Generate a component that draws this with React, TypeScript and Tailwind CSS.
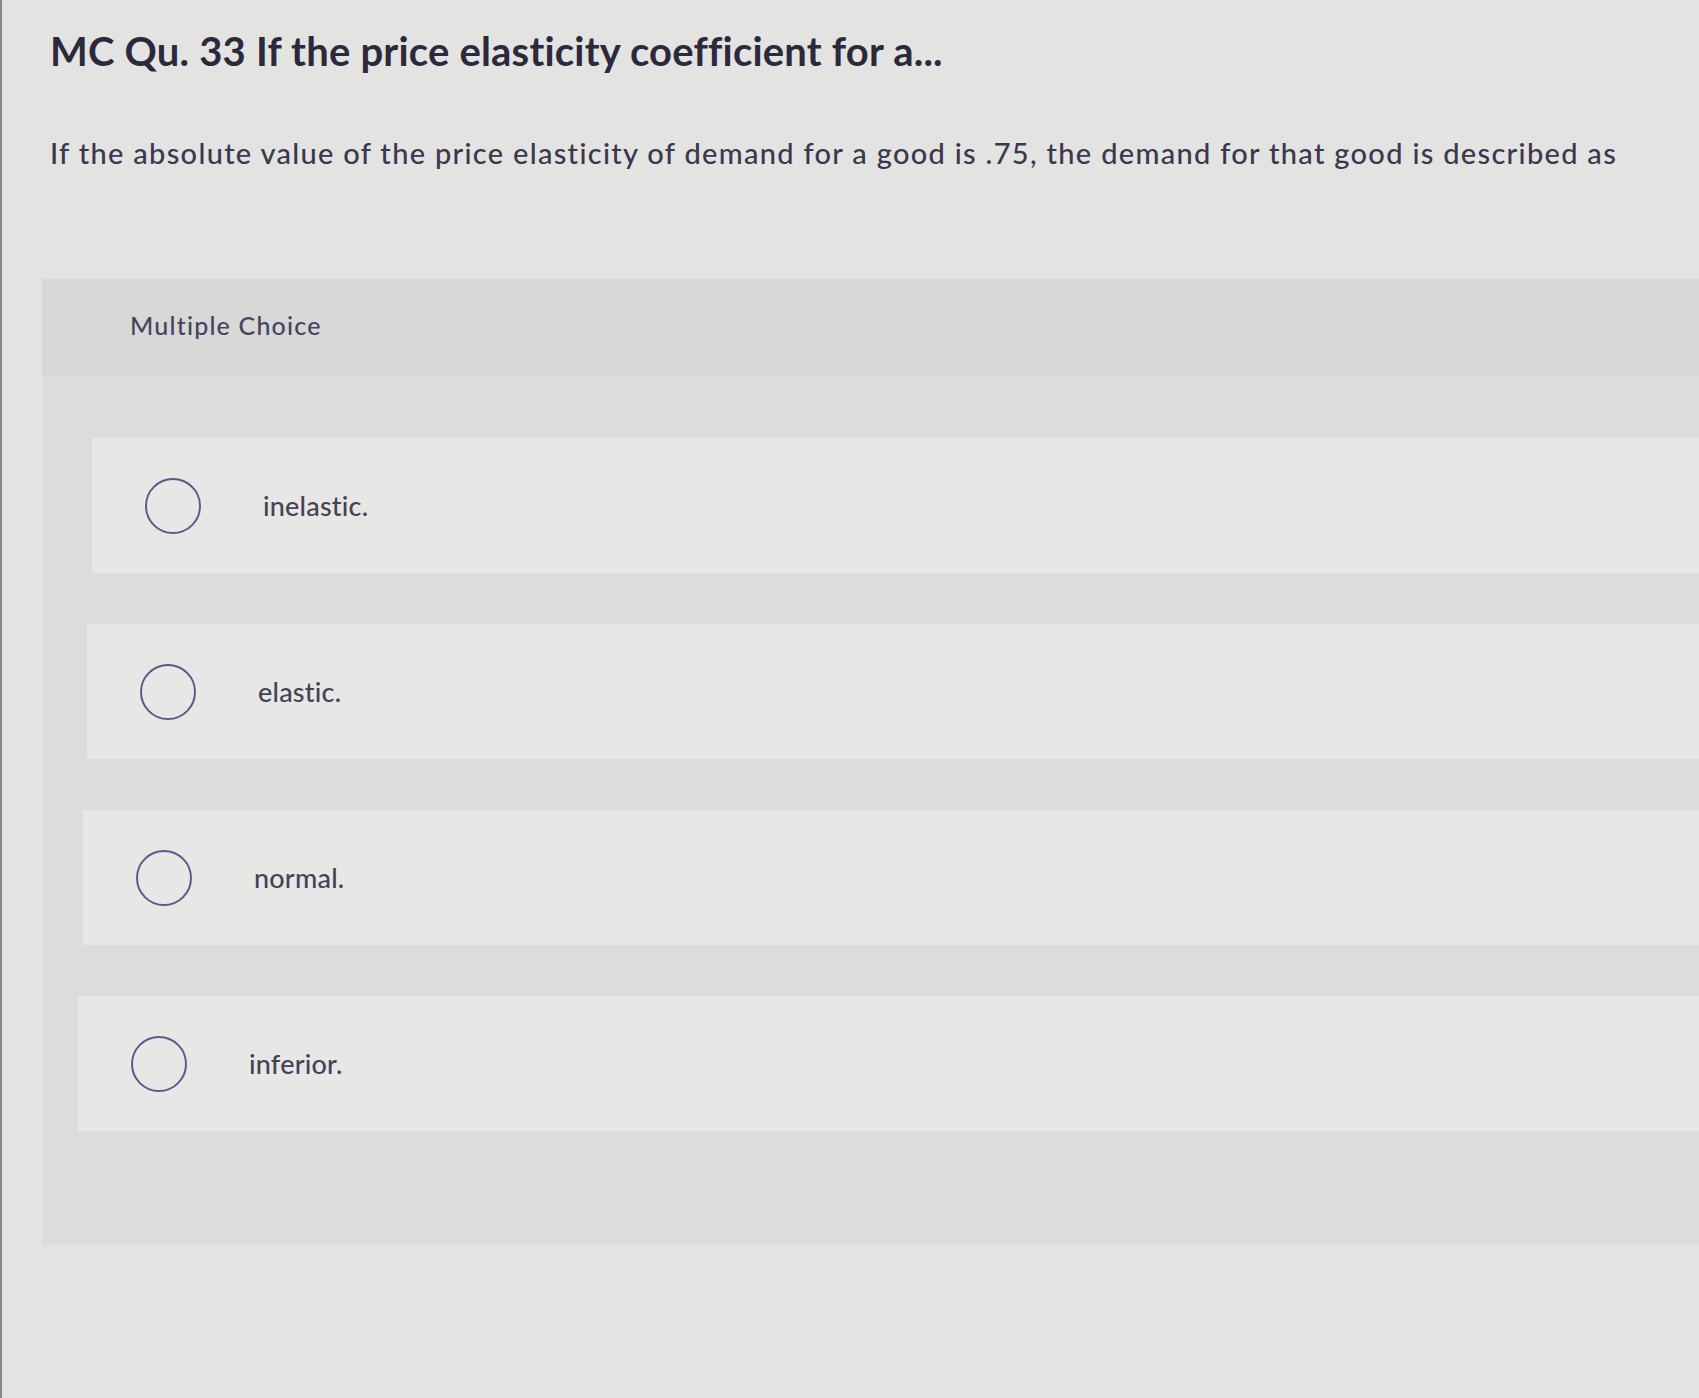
import React from "react";

const options = [
  { label: "inelastic.", ml: "ml-[50px]" },
  { label: "elastic.", ml: "ml-[45px]" },
  { label: "normal.", ml: "ml-[41px]" },
  { label: "inferior.", ml: "ml-[36px]" },
];

function Option({ label, ml }: { label: string; ml: string }) {
  return (
    <div className={`${ml} h-[135px] bg-[#e7e7e5] flex items-center pl-[53px]`}>
      <div className="w-[56px] h-[56px] rounded-full border-[2.5px] border-[#5a5b8a] shrink-0" />
      <div className="ml-[62px] text-[27px] leading-[27px] font-medium tracking-[0.2px] text-[#464256]">{label}</div>
    </div>
  );
}

export default function App() {
  return (
    <div
      className="w-[1699px] min-h-[1398px] bg-[#e3e3e1] overflow-hidden border-l-2 border-[#8a8a88] text-[#3a3549]"
      style={{ fontFamily: "Lato, 'Open Sans', sans-serif" }}
    >
      <div className="pt-[31px] pl-[48px]">
        <h1 className="text-[40px] leading-[40px] font-bold tracking-[0.2px] text-[#2d293c] whitespace-nowrap">
          MC Qu. 33 If the price elasticity coefficient for a...
        </h1>
        <p className="mt-[67px] text-[29px] leading-[29px] font-medium tracking-[1.3px] text-[#3c374e] whitespace-nowrap">
          If the absolute value of the price elasticity of demand for a good is .75, the demand for that good is described as
        </p>
      </div>
      <div className="mt-[112px] ml-[40px] bg-[#dcdcdb] pb-[114px]">
        <div className="h-[97px] bg-[#d8d8d7] pt-[34px] pl-[88px]">
          <div className="text-[25px] leading-[25px] font-medium tracking-[1.2px] text-[#484360]">Multiple Choice</div>
        </div>
        <div className="pt-[62px] flex flex-col gap-[51px]">
          {options.map((o) => (
            <Option key={o.label} label={o.label} ml={o.ml} />
          ))}
        </div>
      </div>
    </div>
  );
}
